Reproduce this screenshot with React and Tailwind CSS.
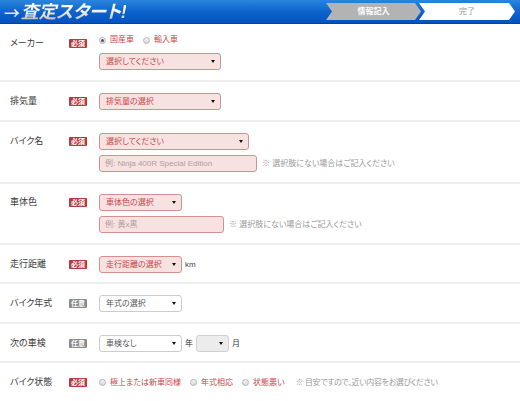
import React from "react";

const FONT = "font-['Liberation_Sans','Noto_Sans_CJK_JP',sans-serif] [font-feature-settings:'palt']";

function Badge({ req = true }) {
  return (
    <span
      className={`inline-flex items-center justify-center w-[18px] h-[9px] rounded-[1px] text-[7px] leading-none font-bold text-white ${
        req ? "bg-[#b73a3d]" : "bg-[#8a8a8a]"
      }`}
    >
      {req ? "必須" : "任意"}
    </span>
  );
}

function Arrow() {
  return (
    <svg width="4" height="3" viewBox="0 0 4 3" className="shrink-0">
      <path d="M0 0 L4 0 L2 3 Z" fill="#111" />
    </svg>
  );
}

function Select({ w, text, plain = false, gray = false }) {
  const cls = gray
    ? "bg-[#ececec] border-[#d0d0d0] text-[#555]"
    : plain
    ? "bg-white border-[#cccccc] text-[#555]"
    : "bg-[#f8e1e1] border-[#d48f8f] text-[#c9474a]";
  return (
    <div
      className={`h-[17px] border rounded-[3px] flex items-center justify-between pl-[6px] pr-[5px] text-[8px] ${cls}`}
      style={{ width: w }}
    >
      <span className="whitespace-nowrap">{text}</span>
      <Arrow />
    </div>
  );
}

function Input({ w, text }) {
  return (
    <div
      className="h-[17px] border rounded-[3px] flex items-center pl-[5px] text-[8px] bg-[#f8e1e1] border-[#d48f8f] text-[#b0a0a0] whitespace-nowrap"
      style={{ width: w }}
    >
      {text}
    </div>
  );
}

function Radio({ checked = false }) {
  return (
    <span className="inline-flex items-center justify-center w-[7px] h-[7px] rounded-full border border-[#b5b5b5] bg-gradient-to-b from-[#f4f4f4] to-[#d8d8d8] shrink-0">
      {checked && <span className="w-[3px] h-[3px] rounded-full bg-[#555]" />}
    </span>
  );
}

function Note({ children, tight = false }) {
  return (
    <span className={`text-[8px] text-[#9a9a9a] whitespace-nowrap ${tight ? "tracking-[-0.4px]" : ""}`}>
      {children}
    </span>
  );
}

function Row({ label, req = true, children, pt = "pt-[11px]", pb = "pb-[10px]" }) {
  return (
    <div className={`flex border-b-2 border-[#eeeeee] ${pt} ${pb}`}>
      <div className="w-[69px] pl-[10px] h-[17px] flex items-center text-[9px] text-[#3a3a3a] whitespace-nowrap">
        {label}
      </div>
      <div className="w-[30px] h-[17px] flex items-center">
        <Badge req={req} />
      </div>
      <div className="flex flex-col gap-[5px]">{children}</div>
    </div>
  );
}

export default function App() {
  return (
    <div className={`w-[520px] h-[401px] overflow-hidden bg-white ${FONT}`}>
      {/* Header */}
      <div className="h-[24px] bg-gradient-to-b from-[#2a86dc] via-[#0e63cc] to-[#0452c2] border-b border-[#0a3f9c] flex items-center justify-between">
        <div className="pl-[4px] text-[18px] leading-none font-bold italic tracking-[-0.3px] bg-gradient-to-b from-white via-[#f0f0f0] to-[#b8b8b8] bg-clip-text text-transparent whitespace-nowrap flex items-center">
          <span className="font-['Noto_Sans_CJK_JP',sans-serif] not-italic text-[16px] mr-[1px]">→</span>
          <span>査定スタート!</span>
        </div>
        <div className="flex items-center pr-[5px] h-[17px]">
          <div className="w-[95px] h-[17px] bg-[#b3b3b3] [clip-path:polygon(0_0,calc(100%-6px)_0,100%_50%,calc(100%-6px)_100%,0_100%,6px_50%)] flex items-center justify-center text-[8px] font-bold text-white">
            情報記入
          </div>
          <div className="w-[96px] h-[17px] -ml-[2px] bg-white [clip-path:polygon(0_0,calc(100%-6px)_0,100%_50%,calc(100%-6px)_100%,0_100%,6px_50%)] flex items-center justify-center text-[8px] text-[#999]">
            完了
          </div>
        </div>
      </div>

      <Row label="メーカー" pb="pb-[10px]">
        <div className="h-[14px] -mt-[2px] mb-[1px] flex items-center gap-[4px] text-[8px] text-[#c9474a] whitespace-nowrap">
          <Radio checked />
          <span>国産車</span>
          <span className="w-[1px]" />
          <Radio />
          <span>輸入車</span>
        </div>
        <Select w={122} text="選択してください" />
      </Row>

      <Row label="排気量">
        <Select w={122} text="排気量の選択" />
      </Row>

      <Row label="バイク名">
        <Select w={150} text="選択してください" />
        <div className="flex items-center gap-[5px]">
          <Input w={158} text="例: Ninja 400R Special Edition" />
          <Note>※ 選択肢にない場合はご記入ください</Note>
        </div>
      </Row>

      <Row label="車体色" pt="pt-[10px]">
        <Select w={83} text="車体色の選択" />
        <div className="flex items-center gap-[5px]">
          <Input w={125} text="例: 黄x黒" />
          <Note>※ 選択肢にない場合はご記入ください</Note>
        </div>
      </Row>

      <Row label="走行距離" pt="pt-[11px]" pb="pb-[9px]">
        <div className="flex items-center gap-[3px]">
          <Select w={83} text="走行距離の選択" />
          <span className="text-[8px] text-[#444]">km</span>
        </div>
      </Row>

      <Row label="バイク年式" req={false} pt="pt-[11px]" pb="pb-[10px]">
        <Select w={83} text="年式の選択" plain />
      </Row>

      <Row label="次の車検" req={false} pt="pt-[11px]" pb="pb-[9px]">
        <div className="flex items-center gap-[3px] text-[8px] text-[#333]">
          <Select w={83} text="車検なし" plain />
          <span>年</span>
          <Select w={33} text="" gray />
          <span>月</span>
        </div>
      </Row>

      <div className="flex pt-[11px]">
        <div className="w-[69px] pl-[10px] h-[17px] flex items-center text-[9px] text-[#3a3a3a] whitespace-nowrap">
          バイク状態
        </div>
        <div className="w-[30px] h-[17px] flex items-center">
          <Badge />
        </div>
        <div className="h-[17px] flex items-center gap-[4px] text-[8px] text-[#c9474a] whitespace-nowrap">
          <Radio />
          <span>極上または新車同様</span>
          <span className="w-[1px]" />
          <Radio />
          <span>年式相応</span>
          <span className="w-[1px]" />
          <Radio />
          <span>状態悪い</span>
          <span className="w-[3px]" />
          <Note tight>※ 目安ですので、近い内容をお選びください</Note>
        </div>
      </div>
    </div>
  );
}
